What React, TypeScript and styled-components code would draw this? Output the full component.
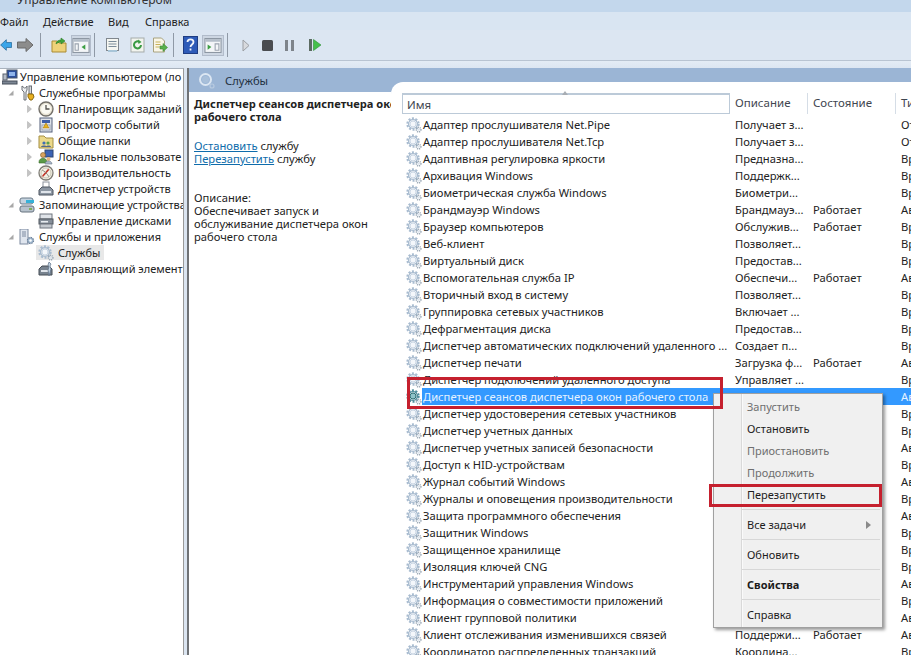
import styled, { createGlobalStyle } from "styled-components";

const GlobalStyle = createGlobalStyle`
  html, body {
    margin: 0;
    padding: 0;
    background: #dfe8f3;
  }
`;

interface IService {
  name: string;
  desc?: string;
  state?: string;
  type: string;
}

const services: IService[] = [
  { name: "Адаптер прослушивателя Net.Pipe", desc: "Получает з...", type: "Отключена" },
  { name: "Адаптер прослушивателя Net.Tcp", desc: "Получает з...", type: "Отключена" },
  { name: "Адаптивная регулировка яркости", desc: "Предназна...", type: "Вручную" },
  { name: "Архивация Windows", desc: "Поддержк...", type: "Вручную" },
  { name: "Биометрическая служба Windows", desc: "Биометри...", type: "Вручную" },
  { name: "Брандмауэр Windows", desc: "Брандмауэ...", state: "Работает", type: "Автоматически" },
  { name: "Браузер компьютеров", desc: "Обслужив...", state: "Работает", type: "Вручную" },
  { name: "Веб-клиент", desc: "Позволяет...", type: "Вручную" },
  { name: "Виртуальный диск", desc: "Предостав...", type: "Вручную" },
  { name: "Вспомогательная служба IP", desc: "Обеспечи...", state: "Работает", type: "Автоматически" },
  { name: "Вторичный вход в систему", desc: "Позволяет...", type: "Вручную" },
  { name: "Группировка сетевых участников", desc: "Включает ...", type: "Вручную" },
  { name: "Дефрагментация диска", desc: "Предостав...", type: "Вручную" },
  { name: "Диспетчер автоматических подключений удаленного ...", desc: "Создает п...", type: "Вручную" },
  { name: "Диспетчер печати", desc: "Загрузка ф...", state: "Работает", type: "Автоматически" },
  { name: "Диспетчер подключений удаленного доступа", desc: "Управляет ...", type: "Вручную" },
  { name: "Диспетчер сеансов диспетчера окон рабочего стола", type: "Автоматически" },
  { name: "Диспетчер удостоверения сетевых участников", type: "Вручную" },
  { name: "Диспетчер учетных данных", type: "Вручную" },
  { name: "Диспетчер учетных записей безопасности", type: "Автоматически" },
  { name: "Доступ к HID-устройствам", type: "Вручную" },
  { name: "Журнал событий Windows", type: "Автоматически" },
  { name: "Журналы и оповещения производительности", type: "Вручную" },
  { name: "Защита программного обеспечения", type: "Автоматически" },
  { name: "Защитник Windows", type: "Вручную" },
  { name: "Защищенное хранилище", type: "Вручную" },
  { name: "Изоляция ключей CNG", type: "Вручную" },
  { name: "Инструментарий управления Windows", type: "Автоматически" },
  { name: "Информация о совместимости приложений", type: "Вручную" },
  { name: "Клиент групповой политики", type: "Автоматически" },
  { name: "Клиент отслеживания изменившихся связей", desc: "Поддержи...", state: "Работает", type: "Автоматически" },
  { name: "Координатор распределенных транзакций", desc: "Координа...", type: "Вручную" },
];

const SELECTED = 16;

function Gear({ selected }: { selected?: boolean }) {
  const rim = selected ? "#4f8d9c" : "#a9bcd0";
  const inner = selected ? "#2f6f74" : "#c9d6e4";
  return (
    <svg width="16" height="16" viewBox="0 0 16 16">
      <circle cx="7" cy="7" r="5.6" fill="none" stroke={rim} strokeWidth="2.2" strokeDasharray="2 1.52" />
      <circle cx="7" cy="7" r="4.4" fill="none" stroke={rim} strokeWidth="1.4" />
      <circle cx="7" cy="7" r="3" fill={selected ? "#8fc3c9" : "#f4f7fb"} stroke={inner} strokeWidth="1" />
      <circle cx="12.6" cy="12.6" r="2.3" fill="none" stroke="#98a6b4" strokeWidth="1.5" strokeDasharray="1.1 0.7" />
      <circle cx="12.6" cy="12.6" r="1.2" fill="#dbe3ec" />
    </svg>
  );
}

const treeIcons: Record<string, React.ReactNode> = {
  computer: (
    <svg width="16" height="16" viewBox="0 0 16 16">
      <rect x="5" y="1" width="10" height="8" fill="#2b4f9e" stroke="#49566b" />
      <rect x="7" y="3" width="6" height="4" fill="#8fb4ea" />
      <rect x="1" y="5" width="4" height="6" fill="#b5bcc6" stroke="#5a6270" />
      <rect x="0" y="12" width="15" height="3" fill="#7d8794" stroke="#444c58" />
    </svg>
  ),
  tools: (
    <svg width="16" height="16" viewBox="0 0 16 16">
      <path d="M3 1v4l2 2v8h2V7l1-2V1L6.500 3h-1z" fill="#eef0f2" stroke="#6b6f75" />
      <rect x="10" y="1" width="2.500" height="8" fill="#d9dce0" stroke="#6b6f75" />
      <path d="M9 9h5l1 3-2 3h-2l-2-3z" fill="#e9b01f" stroke="#8c6a10" />
    </svg>
  ),
  clock: (
    <svg width="16" height="16" viewBox="0 0 16 16">
      <circle cx="8" cy="8" r="7" fill="#e9e4d4" stroke="#73706a" strokeWidth="1.400" />
      <circle cx="8" cy="8" r="5" fill="#fbfaf3" />
      <path d="M8 4v4h3.500" fill="none" stroke="#55534e" strokeWidth="1.300" />
    </svg>
  ),
  events: (
    <svg width="16" height="16" viewBox="0 0 16 16">
      <rect x="2" y="1" width="12" height="14" fill="#dfe3ea" stroke="#55617a" />
      <rect x="4" y="3" width="8" height="3" fill="#3e5fa8" />
      <rect x="4" y="8" width="8" height="5" fill="#f5f6f8" stroke="#9aa3b2" />
      <path d="M8 6l3 5H5z" fill="#e8b320" stroke="#a5780d" strokeWidth="0.600" />
    </svg>
  ),
  folder: (
    <svg width="16" height="16" viewBox="0 0 16 16">
      <path d="M1 3h5l2 2h7v10H1z" fill="#ecd98a" stroke="#a58f42" />
      <circle cx="6" cy="10" r="1.600" fill="#3f6fb5" />
      <circle cx="10" cy="10" r="1.600" fill="#5b9e4d" />
      <path d="M3 14c0-2 6-2 6 0zM8 14c0-2 5-2 5 0z" fill="#51688c" />
    </svg>
  ),
  users: (
    <svg width="16" height="16" viewBox="0 0 16 16">
      <rect x="7" y="1" width="8" height="7" fill="#3c63b4" stroke="#30466f" />
      <circle cx="5" cy="6" r="2.500" fill="#d9a35f" stroke="#7a5a2c" strokeWidth="0.600" />
      <path d="M1 13c0-5 8-5 8 0v1H1z" fill="#5a9a47" stroke="#3a6b2d" strokeWidth="0.600" />
      <circle cx="10.500" cy="10" r="2" fill="#e2b681" />
      <path d="M7 15c0-4 7-4 7 0z" fill="#a9b6c6" stroke="#6d7a8a" strokeWidth="0.600" />
    </svg>
  ),
  perf: (
    <svg width="16" height="16" viewBox="0 0 16 16">
      <circle cx="8" cy="8" r="7" fill="#f3f1e7" stroke="#7d7b74" strokeWidth="1.300" />
      <path d="M4 12L11 4" stroke="#c23226" strokeWidth="1.600" />
      <path d="M4 5c2 1 5 3 7 7" fill="none" stroke="#8b8b80" />
      <circle cx="8" cy="8" r="5" fill="none" stroke="#c9c6b4" />
    </svg>
  ),
  device: (
    <svg width="16" height="16" viewBox="0 0 16 16">
      <rect x="5" y="1" width="6" height="6" fill="none" stroke="#8d949d" />
      <path d="M1 9l3-3h8l3 3v5H1z" fill="#8d97a3" stroke="#4d5560" />
      <rect x="3" y="10" width="10" height="2" fill="#dfe4ea" />
    </svg>
  ),
  storage: (
    <svg width="16" height="16" viewBox="0 0 16 16">
      <rect x="1" y="1" width="13" height="6" rx="2" fill="#c5d3df" stroke="#6b7a88" />
      <rect x="7" y="3" width="8" height="3" fill="#37b1d8" />
      <rect x="1" y="9" width="14" height="6" rx="2" fill="#b7c2cc" stroke="#66727e" />
      <rect x="10" y="11" width="3" height="2" fill="#7fae5a" />
    </svg>
  ),
  disk: (
    <svg width="16" height="16" viewBox="0 0 16 16">
      <rect x="2" y="1" width="12" height="5" fill="#dfe3e8" stroke="#6e757e" />
      <rect x="1" y="6" width="14" height="5" fill="#858e99" stroke="#50575f" />
      <rect x="2" y="11" width="12" height="4" fill="#c4c9cf" stroke="#6e757e" />
      <rect x="3" y="8" width="7" height="1.500" fill="#e8ecf0" />
    </svg>
  ),
  apps: (
    <svg width="16" height="16" viewBox="0 0 16 16">
      <rect x="1" y="0" width="8" height="15" fill="#dfe5ee" stroke="#7c8aa0" />
      <path d="M3 3h4M3 5h4M3 7h4" stroke="#7c8aa0" />
      <circle cx="11.500" cy="11.500" r="3" fill="#a6bdd3" stroke="#6d8199" strokeWidth="1.300" strokeDasharray="1.500 0.800" />
      <circle cx="11.500" cy="11.500" r="1.200" fill="#fff" />
    </svg>
  ),
  wmi: (
    <svg width="16" height="16" viewBox="0 0 16 16">
      <path d="M1 8l3-3h7l3 3v6H1z" fill="#78838f" stroke="#454c55" />
      <rect x="3" y="9" width="7" height="2" fill="#dfe4ea" />
      <path d="M11 1l2 2-1 2 1 3-2 7-1-6 1-3-1-2z" fill="#c2d3e2" stroke="#5b6f85" strokeWidth="0.700" />
    </svg>
  ),
};

interface ITreeNode {
  label: string;
  level: number;
  icon?: string;
  arrow?: "open" | "closed";
  active?: boolean;
}

const tree: ITreeNode[] = [
  { label: "Управление компьютером (ло", level: 0, icon: "computer" },
  { label: "Служебные программы", level: 1, icon: "tools", arrow: "open" },
  { label: "Планировщик заданий", level: 2, icon: "clock", arrow: "closed" },
  { label: "Просмотр событий", level: 2, icon: "events", arrow: "closed" },
  { label: "Общие папки", level: 2, icon: "folder", arrow: "closed" },
  { label: "Локальные пользовате", level: 2, icon: "users", arrow: "closed" },
  { label: "Производительность", level: 2, icon: "perf", arrow: "closed" },
  { label: "Диспетчер устройств", level: 2, icon: "device" },
  { label: "Запоминающие устройства", level: 1, icon: "storage", arrow: "open" },
  { label: "Управление дисками", level: 2, icon: "disk" },
  { label: "Службы и приложения", level: 1, icon: "apps", arrow: "open" },
  { label: "Службы", level: 2, active: true },
  { label: "Управляющий элемент", level: 2, icon: "wmi" },
];

function App() {
  return (
    <Screen>
      <GlobalStyle />
      <TitleBar>
        <TitleText>Управление компьютером</TitleText>
      </TitleBar>
      <MenuBar>
        <MenuItem $w={43}>Файл</MenuItem>
        <MenuItem $w={65}>Действие</MenuItem>
        <MenuItem $w={37}>Вид</MenuItem>
        <MenuItem $w={60}>Справка</MenuItem>
      </MenuBar>
      <Toolbar>
        <ToolSlot $w={13}>
          <svg width="13" height="16" viewBox="-5 0 16 16" style={{ marginLeft: -3 }}>
            <path d="M10.500 5H4V1.500L-3 8l7 6.500V11h6.500z" fill="#39a5ea" stroke="#2a6c9c" />
          </svg>
        </ToolSlot>
        <ToolSlot $w={24}>
          <svg width="17" height="16" viewBox="0 0 17 16">
            <path d="M0.500 5H9V1.500L16 8l-7 6.500V11H0.500z" fill="#8c8c8c" stroke="#6a6a6a" />
          </svg>
        </ToolSlot>
        <ToolSep />
        <ToolSlot $w={25}>
          <svg width="16" height="16" viewBox="0 0 16 16">
            <path d="M1 4h5l2 2h7v9H1z" fill="#eed27a" stroke="#a98b35" />
            <path d="M5 7c0-3 3-4 5-4V1l4 3-4 3V5C8 5 6 6 5 7z" fill="#3fa53a" stroke="#2b7a28" strokeWidth="0.600" />
          </svg>
        </ToolSlot>
        <ToolSlot $w={20} $pressed>
          <svg width="18" height="15" viewBox="0 0 16 14">
            <rect x="0.500" y="0.500" width="15" height="13" fill="#f4f6f8" stroke="#8d97a3" />
            <rect x="1" y="1" width="14" height="2.500" fill="#b4bec9" />
            <path d="M2.500 5.500h3v6h-3z" fill="none" stroke="#9aa3ae" />
            <path d="M12 6v5L8.500 8.500z" fill="#3f9f45" />
          </svg>
        </ToolSlot>
        <ToolSep />
        <ToolSlot $w={25}>
          <svg width="15" height="16" viewBox="0 0 15 16">
            <rect x="1.500" y="1.500" width="12" height="12" fill="#f6f7f2" stroke="#80878e" />
            <path d="M3.500 4.500h8M3.500 7h8M3.500 9.500h8" stroke="#7c8d9b" />
            <rect x="3" y="13" width="9" height="2" fill="#a8c5d8" />
          </svg>
        </ToolSlot>
        <ToolSlot $w={24}>
          <svg width="15" height="16" viewBox="0 0 15 16">
            <rect x="1" y="1" width="13" height="14" fill="#f2f4ee" stroke="#a5abaa" />
            <path d="M11 8a3.500 3.500 0 1 1-1.500-3" fill="none" stroke="#3a9a42" strokeWidth="2" />
            <path d="M8 2.500l3.500 2.500-3 2z" fill="#3a9a42" />
          </svg>
        </ToolSlot>
        <ToolSlot $w={21}>
          <svg width="16" height="16" viewBox="0 0 16 16">
            <path d="M1.500 1h8l3 3v11h-11z" fill="#f9f6e8" stroke="#a8a27f" />
            <path d="M3.500 5h5M3.500 7.500h5M3.500 10h4" stroke="#c8b25a" />
            <path d="M8 9h3V6.500L15.500 10.500 11 14.500V12H8z" fill="#57b04c" stroke="#3c8634" strokeWidth="0.600" />
          </svg>
        </ToolSlot>
        <ToolSep />
        <ToolSlot $w={23}>
          <svg width="15" height="18" viewBox="0 0 15 18">
            <rect x="0.500" y="0.500" width="14" height="17" fill="#2e5bb8" stroke="#1f3d82" />
            <path d="M4.500 6c0-3.500 6-3.500 6 0 0 2.500-3 2.500-3 5M7.500 12.500v2" fill="none" stroke="#f2f5fb" strokeWidth="1.800" />
          </svg>
        </ToolSlot>
        <ToolSlot $w={22} $pressed>
          <svg width="18" height="15" viewBox="0 0 16 14">
            <rect x="0.500" y="0.500" width="15" height="13" fill="#f4f6f8" stroke="#8d97a3" />
            <rect x="1" y="1" width="14" height="2.500" fill="#b4bec9" />
            <path d="M3 6v5l3.500-2.500z" fill="#3f9f45" />
            <path d="M10 5.500h3.500v6H10z" fill="none" stroke="#9aa3ae" />
          </svg>
        </ToolSlot>
        <ToolSep />
        <ToolSlot $w={25}>
          <svg width="8" height="13" viewBox="0 0 8 13">
            <path d="M1 1l6 5.500L1 12z" fill="#d8dade" stroke="#9b9ea3" />
          </svg>
        </ToolSlot>
        <ToolSlot $w={19}>
          <svg width="11" height="11" viewBox="0 0 11 11">
            <rect width="11" height="11" rx="1.500" fill="#4a4c50" />
          </svg>
        </ToolSlot>
        <ToolSlot $w={25}>
          <svg width="9" height="11" viewBox="0 0 9 11">
            <rect width="3" height="11" fill="#7e848b" />
            <rect x="6" width="3" height="11" fill="#7e848b" />
          </svg>
        </ToolSlot>
        <ToolSlot $w={25}>
          <svg width="12" height="12" viewBox="0 0 12 12">
            <rect width="3" height="12" fill="#5c6b62" />
            <path d="M4.500 0.500L12 6l-7.500 5.500z" fill="#45c04a" stroke="#2f8f35" strokeWidth="0.600" />
          </svg>
        </ToolSlot>
      </Toolbar>

      <Body>
        <TreePane>
          {tree.map((node) => (
            <TreeRow key={node.label} $level={node.level}>
              {node.level > 0 && (
                <TreeArrow>
                  {node.arrow === "open" && (
                    <svg width="6" height="6" viewBox="0 0 6 6">
                      <path d="M5.500 0.500v5h-5z" fill="#a8a8a8" />
                    </svg>
                  )}
                  {node.arrow === "closed" && (
                    <svg width="5" height="8" viewBox="0 0 5 8">
                      <path d="M0.500 0.500L4.500 4l-4 3.500z" fill="#c4c4c4" stroke="#a8a8a8" strokeWidth="0.500" />
                    </svg>
                  )}
                </TreeArrow>
              )}
              <TreeEntry $active={node.active} $root={node.level === 0}>
                <TreeIcon $root={node.level === 0}>{node.icon ? treeIcons[node.icon] : <Gear />}</TreeIcon>
                <TreeLabel>{node.label}</TreeLabel>
              </TreeEntry>
            </TreeRow>
          ))}
        </TreePane>

        <ContentPane>
          <DetailColumn>
            <DetailHead>
              <svg width="17" height="17" viewBox="0 0 17 17">
                <circle cx="7.500" cy="7.500" r="5.500" fill="none" stroke="#dbe6f2" strokeWidth="2" />
                <circle cx="7.500" cy="7.500" r="3.500" fill="#a9c0da" />
                <circle cx="14" cy="14" r="2" fill="none" stroke="#b9cbe0" strokeWidth="1.200" />
              </svg>
              <DetailHeadText>Службы</DetailHeadText>
            </DetailHead>
            <DetailBody>
              <DetailTitle>
                Диспетчер сеансов диспетчера окон
                <br />
                рабочего стола
              </DetailTitle>
              <DetailActions>
                <DetailLink>Остановить</DetailLink> службу
                <br />
                <DetailLink>Перезапустить</DetailLink> службу
              </DetailActions>
              <DetailText>
                Описание:
                <br />
                Обеспечивает запуск и
                <br />
                обслуживание диспетчера окон
                <br />
                рабочего стола
              </DetailText>
            </DetailBody>
          </DetailColumn>

          <ListColumn>
            <SortMark />
            <ListHeader>
              <NameHeader>Имя</NameHeader>
              <HeaderCell $w={78}>Описание</HeaderCell>
              <HeaderCell $w={88}>Состояние</HeaderCell>
              <HeaderCell $w={60}>Тип запуска</HeaderCell>
            </ListHeader>
            <ListRows>
              {services.map((each, index) => (
                <ServiceRow key={each.name}>
                  <RowIcon>
                    <Gear selected={index === SELECTED} />
                  </RowIcon>
                  <RowCells $selected={index === SELECTED}>
                    <NameCell>{each.name}</NameCell>
                    <Cell $w={78}>{each.desc}</Cell>
                    <Cell $w={88}>{each.state}</Cell>
                    <Cell $w={60}>{each.type}</Cell>
                  </RowCells>
                </ServiceRow>
              ))}
            </ListRows>
          </ListColumn>
        </ContentPane>
      </Body>

      <ContextMenu>
        <ActionItem $disabled>Запустить</ActionItem>
        <ActionItem>Остановить</ActionItem>
        <ActionItem $disabled>Приостановить</ActionItem>
        <ActionItem $disabled>Продолжить</ActionItem>
        <ActionItem>Перезапустить</ActionItem>
        <MenuSep />
        <ActionItem>
          Все задачи
          <SubArrow />
        </ActionItem>
        <MenuSep />
        <ActionItem>Обновить</ActionItem>
        <MenuSep />
        <ActionItem $bold>Свойства</ActionItem>
        <MenuSep />
        <ActionItem>Справка</ActionItem>
      </ContextMenu>

      <RedFrame $x={407} $y={377} $w={316} $h={32} />
      <RedFrame $x={709} $y={484} $w={173} $h={23} />
    </Screen>
  );
}

export default App;

const Screen = styled.div`
  position: relative;
  display: flex;
  flex-direction: column;
  width: 911px;
  height: 655px;
  overflow: hidden;
  background: #dfe8f3;
  color: #222;
  font-family: "Noto Sans", "Liberation Sans", sans-serif;
  font-size: 11.2px;
`;

const TitleBar = styled.div`
  height: 12px;
  overflow: hidden;
  background: #c3d7ec;
`;

const TitleText = styled.div`
  margin: -8px 0 0 17px;
  line-height: 16px;
  font-size: 12px;
  color: #333;
`;

const MenuBar = styled.div`
  display: flex;
  align-items: center;
  height: 18px;
  background: #d9e5f2;
  font-size: 11px;
`;

const MenuItem = styled.div<{ $w: number }>`
  width: ${(p) => p.$w}px;
  white-space: nowrap;
`;

const Toolbar = styled.div`
  display: flex;
  align-items: center;
  height: 30px;
  background: #dce6f2;
  border-bottom: 1px solid #b9c4d2;
`;

const ToolSlot = styled.div<{ $w: number; $pressed?: boolean }>`
  display: flex;
  align-items: center;
  justify-content: center;
  box-sizing: border-box;
  width: ${(p) => p.$w}px;
  height: 21px;
  background: ${(p) => (p.$pressed ? "#cdd6e2" : "transparent")};
  border: ${(p) => (p.$pressed ? "1px solid #b2bccb" : "none")};
`;

const ToolSep = styled.div`
  width: 1px;
  height: 24px;
  margin: 0 5px 0 3px;
  background: #8f99a6;
`;

const Body = styled.div`
  display: flex;
  flex: 1;
  min-height: 0;
  padding-top: 7px;
  background: linear-gradient(#e4ecf5, #dbe5f1 8px);
`;

const TreePane = styled.div`
  box-sizing: border-box;
  width: 184px;
  margin-right: 3px;
  overflow: hidden;
  background: #fff;
  border-top: 1px solid #a9b2bd;
  border-right: 1px solid #9a9a9a;
  font-size: 11px;
`;

const TreeRow = styled.div<{ $level: number }>`
  display: flex;
  align-items: flex-start;
  height: 16px;
  padding-left: ${(p) => [0, 6, 25][p.$level]}px;
  white-space: nowrap;
`;

const TreeArrow = styled.div`
  display: flex;
  align-items: center;
  justify-content: center;
  flex: none;
  width: 7px;
  height: 15px;
  margin-left: 1px;
`;

const TreeEntry = styled.div<{ $active?: boolean; $root?: boolean }>`
  display: flex;
  align-items: center;
  height: 15px;
  margin-left: ${(p) => (p.$root ? 2 : 3)}px;
  padding: 0 4px 0 ${(p) => (p.$root ? 0 : 2)}px;
  background: ${(p) => (p.$active ? "#e8e8e8" : "transparent")};
`;

const TreeIcon = styled.div<{ $root?: boolean }>`
  display: flex;
  flex: none;
  width: 16px;
  height: 16px;
  margin-right: ${(p) => (p.$root ? 2 : 4)}px;
`;

const TreeLabel = styled.div`
  line-height: 15px;
`;

const ContentPane = styled.div`
  display: flex;
  flex: 1;
  min-width: 0;
  background: #9bb5d5;
  border-left: 2px solid #6f7276;
`;

const DetailColumn = styled.div`
  display: flex;
  flex-direction: column;
  flex: none;
  width: 202px;
`;

const DetailHead = styled.div`
  display: flex;
  align-items: center;
  gap: 10px;
  height: 24px;
  padding-left: 9px;
`;

const DetailHeadText = styled.div`
  color: #22303f;
`;

const DetailBody = styled.div`
  flex: 1;
  padding: 5px 0 0 5px;
  background: #fff;
  line-height: 13px;
  white-space: nowrap;
`;

const DetailTitle = styled.div`
  font-weight: 700;
  font-size: 11.1px;
`;

const DetailActions = styled.div`
  margin-top: 16px;
`;

const DetailLink = styled.span`
  color: #0f6cab;
  text-decoration: underline;
`;

const DetailText = styled.div`
  margin-top: 26px;
`;

const ListColumn = styled.div`
  position: relative;
  flex: 1;
  min-width: 0;
  margin-top: 14px;
  padding: 11px 0 0 11px;
  overflow: hidden;
  background: #fff;
  border-top-left-radius: 12px;
`;

const SortMark = styled.div`
  position: absolute;
  top: 9px;
  left: 171px;
  border-left: 3px solid transparent;
  border-right: 3px solid transparent;
  border-bottom: 4px solid #a8adb3;
`;

const ListHeader = styled.div`
  display: flex;
  height: 21px;
  line-height: 20px;
  font-size: 11.5px;
  color: #3f4650;
  white-space: nowrap;
`;

const NameHeader = styled.div`
  box-sizing: border-box;
  flex: none;
  width: 328px;
  padding-left: 4px;
  border: 1px solid #bccad8;
  border-top-width: 2px;
`;

const HeaderCell = styled.div<{ $w: number }>`
  box-sizing: border-box;
  flex: none;
  width: ${(p) => p.$w}px;
  padding-left: 5px;
  border-right: 1px solid #d5dde6;
`;

const ListRows = styled.div`
  padding-top: 2px;
`;

const ServiceRow = styled.div`
  display: flex;
  height: 17px;
  white-space: nowrap;
`;

const RowIcon = styled.div`
  display: flex;
  flex: none;
  align-items: center;
  width: 20px;
  padding-left: 4px;
  box-sizing: border-box;
`;

const RowCells = styled.div<{ $selected?: boolean }>`
  display: flex;
  flex: 1;
  line-height: 17px;
  background: ${(p) => (p.$selected ? "#3399ff" : "transparent")};
  color: ${(p) => (p.$selected ? "#e6f3ff" : "#222")};
`;

const NameCell = styled.div`
  flex: none;
  width: 308px;
  padding-left: 1px;
  box-sizing: border-box;
  overflow: hidden;
`;

const Cell = styled.div<{ $w: number }>`
  flex: none;
  box-sizing: border-box;
  width: ${(p) => p.$w}px;
  padding-left: 5px;
`;

const ContextMenu = styled.div`
  position: absolute;
  top: 393px;
  left: 713px;
  box-sizing: border-box;
  width: 170px;
  height: 235px;
  padding: 2px;
  font-size: 11px;
  background: linear-gradient(90deg, #f0f0f0 27px, #d9d9d9 27px, #d9d9d9 28px, #fafafa 28px, #fafafa 29px, #f0f0f0 29px);
  border: 1px solid #a0a0a0;
  box-shadow: 2px 2px 3px rgba(0, 0, 0, 0.4);
`;

const ActionItem = styled.div<{ $disabled?: boolean; $bold?: boolean }>`
  position: relative;
  height: 22px;
  padding-left: 31px;
  line-height: 22px;
  color: ${(p) => (p.$disabled ? "#6f6f6f" : "#1c1c1c")};
  font-weight: ${(p) => (p.$bold ? 700 : 400)};
`;

const SubArrow = styled.span`
  position: absolute;
  top: 7px;
  right: 9px;
  border-top: 4px solid transparent;
  border-bottom: 4px solid transparent;
  border-left: 5px solid #8a8a8a;
`;

const MenuSep = styled.div`
  height: 1px;
  margin: 3px 0 4px 26px;
  background: #d7d7d7;
`;

const RedFrame = styled.div<{ $x: number; $y: number; $w: number; $h: number }>`
  position: absolute;
  top: ${(p) => p.$y}px;
  left: ${(p) => p.$x}px;
  box-sizing: border-box;
  width: ${(p) => p.$w}px;
  height: ${(p) => p.$h}px;
  border: 3px solid #c5202e;
`;
